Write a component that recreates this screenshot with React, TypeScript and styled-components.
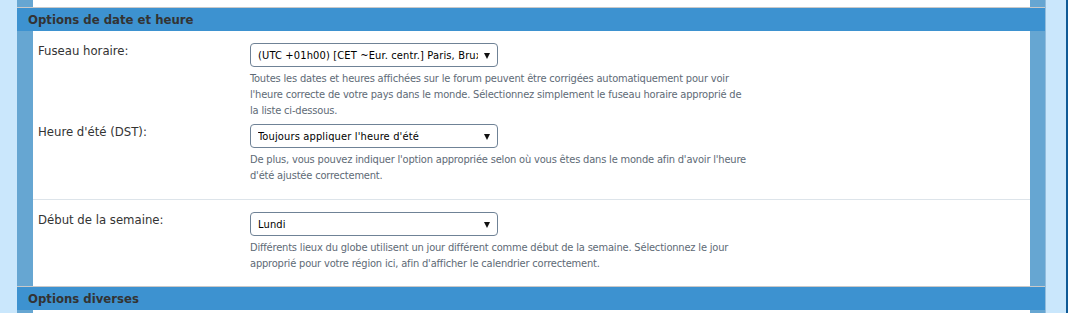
import React from "react";
import styled, { createGlobalStyle } from "styled-components";

const Global = createGlobalStyle`
  html, body { margin: 0; padding: 0; }
  body {
    background: #cae7fc;
    font-family: "DejaVu Sans Condensed", "DejaVu Sans", sans-serif;
    overflow: hidden;
  }
`;

const Page = styled.div`
  display: flex;
  align-items: flex-start;
  width: 1068px;
  height: 313px;
  background: #cae7fc;
  overflow: hidden;
`;

const Gutter = styled.div`
  width: 17px;
  flex: none;
`;

const Panel = styled.div`
  width: 1028px;
  height: 100%;
  flex: none;
  background: #66a6d2;
  display: flex;
  flex-direction: column;
  border-right: 1px solid #93bddd;
  overflow: hidden;
  & > * {
    flex: none;
  }
`;

const RightBand = styled.div`
  flex: 1;
  height: 100%;
  border-right: 2px solid #0f5a96;
`;

const Fieldset = styled.div<{ $h?: number }>`
  margin: 0 15px 0 16px;
  background: #fff;
  ${(p) => (p.$h !== undefined ? `height: ${p.$h}px;` : "")}
`;

const Header = styled.h3`
  margin: 0;
  height: 23px;
  border-top: 1px solid #c9c9c9;
  background: #3d92d0;
  color: #333;
  font-size: 13px;
  font-weight: bold;
  line-height: 23px;
  padding-left: 11px;
`;

const Row = styled.div<{ $sep?: boolean }>`
  display: grid;
  grid-template-columns: 212px 1fr;
  padding: 12px 0 ${(p) => (p.$sep ? 9 : 10)}px 5px;
  border-top: ${(p) => (p.$sep ? "1px solid #dde4ea" : "none")};
`;

const Label = styled.div`
  font-size: 13px;
  color: #333;
  line-height: 16px;
`;

const Field = styled.div`
  display: flex;
  flex-direction: column;
  padding-bottom: 5px;
`;

const Select = styled.div`
  width: 239px;
  height: 22px;
  border: 1px solid #6f8296;
  border-radius: 4px;
  box-sizing: content-box;
  display: flex;
  align-items: center;
  padding: 0 0 0 7px;
  font-size: 11px;
  color: #000;
  position: relative;
`;

const SelectText = styled.span`
  width: 220px;
  overflow: hidden;
  white-space: nowrap;
  letter-spacing: 0.15px;
`;

const Arrow = styled.span`
  position: absolute;
  right: 7px;
  top: 9px;
  width: 0;
  height: 0;
  border-left: 3px solid transparent;
  border-right: 3px solid transparent;
  border-top: 6px solid #111;
`;

const Desc = styled.div`
  font-size: 11px;
  letter-spacing: -0.18px;
  color: #5e6a76;
  line-height: 16px;
  padding-top: 4px;
  white-space: nowrap;
`;

type Item = { label: string; value: string; lines: string[] };

const Group = ({ items, sep }: { items: Item[]; sep?: boolean }) => (
  <Row $sep={sep}>
    {items.map((it) => (
      <React.Fragment key={it.label}>
        <Label>{it.label}</Label>
        <Field>
          <Select>
            <SelectText>{it.value}</SelectText>
            <Arrow />
          </Select>
          <Desc>
            {it.lines.map((l, i) => (
              <div key={i}>{l}</div>
            ))}
          </Desc>
        </Field>
      </React.Fragment>
    ))}
  </Row>
);

export default function App() {
  return (
    <>
      <Global />
      <Page>
        <Gutter />
        <Panel>
          <Fieldset $h={7} />
          <Header>Options de date et heure</Header>
          <Fieldset>
            <Group
              items={[
                {
                  label: "Fuseau horaire:",
                  value: "(UTC +01h00) [CET ~Eur. centr.] Paris, Bruxelles",
                  lines: [
                    "Toutes les dates et heures affichées sur le forum peuvent être corrigées automatiquement pour voir",
                    "l'heure correcte de votre pays dans le monde. Sélectionnez simplement le fuseau horaire approprié de",
                    "la liste ci-dessous.",
                  ],
                },
                {
                  label: "Heure d'été (DST):",
                  value: "Toujours appliquer l'heure d'été",
                  lines: [
                    "De plus, vous pouvez indiquer l'option appropriée selon où vous êtes dans le monde afin d'avoir l'heure",
                    "d'été ajustée correctement.",
                  ],
                },
              ]}
            />
            <Group
              sep
              items={[
                {
                  label: "Début de la semaine:",
                  value: "Lundi",
                  lines: [
                    "Différents lieux du globe utilisent un jour différent comme début de la semaine. Sélectionnez le jour",
                    "approprié pour votre région ici, afin d'afficher le calendrier correctement.",
                  ],
                },
              ]}
            />
          </Fieldset>
          <Header>Options diverses</Header>
          <Fieldset $h={10} />
        </Panel>
        <RightBand />
      </Page>
    </>
  );
}
